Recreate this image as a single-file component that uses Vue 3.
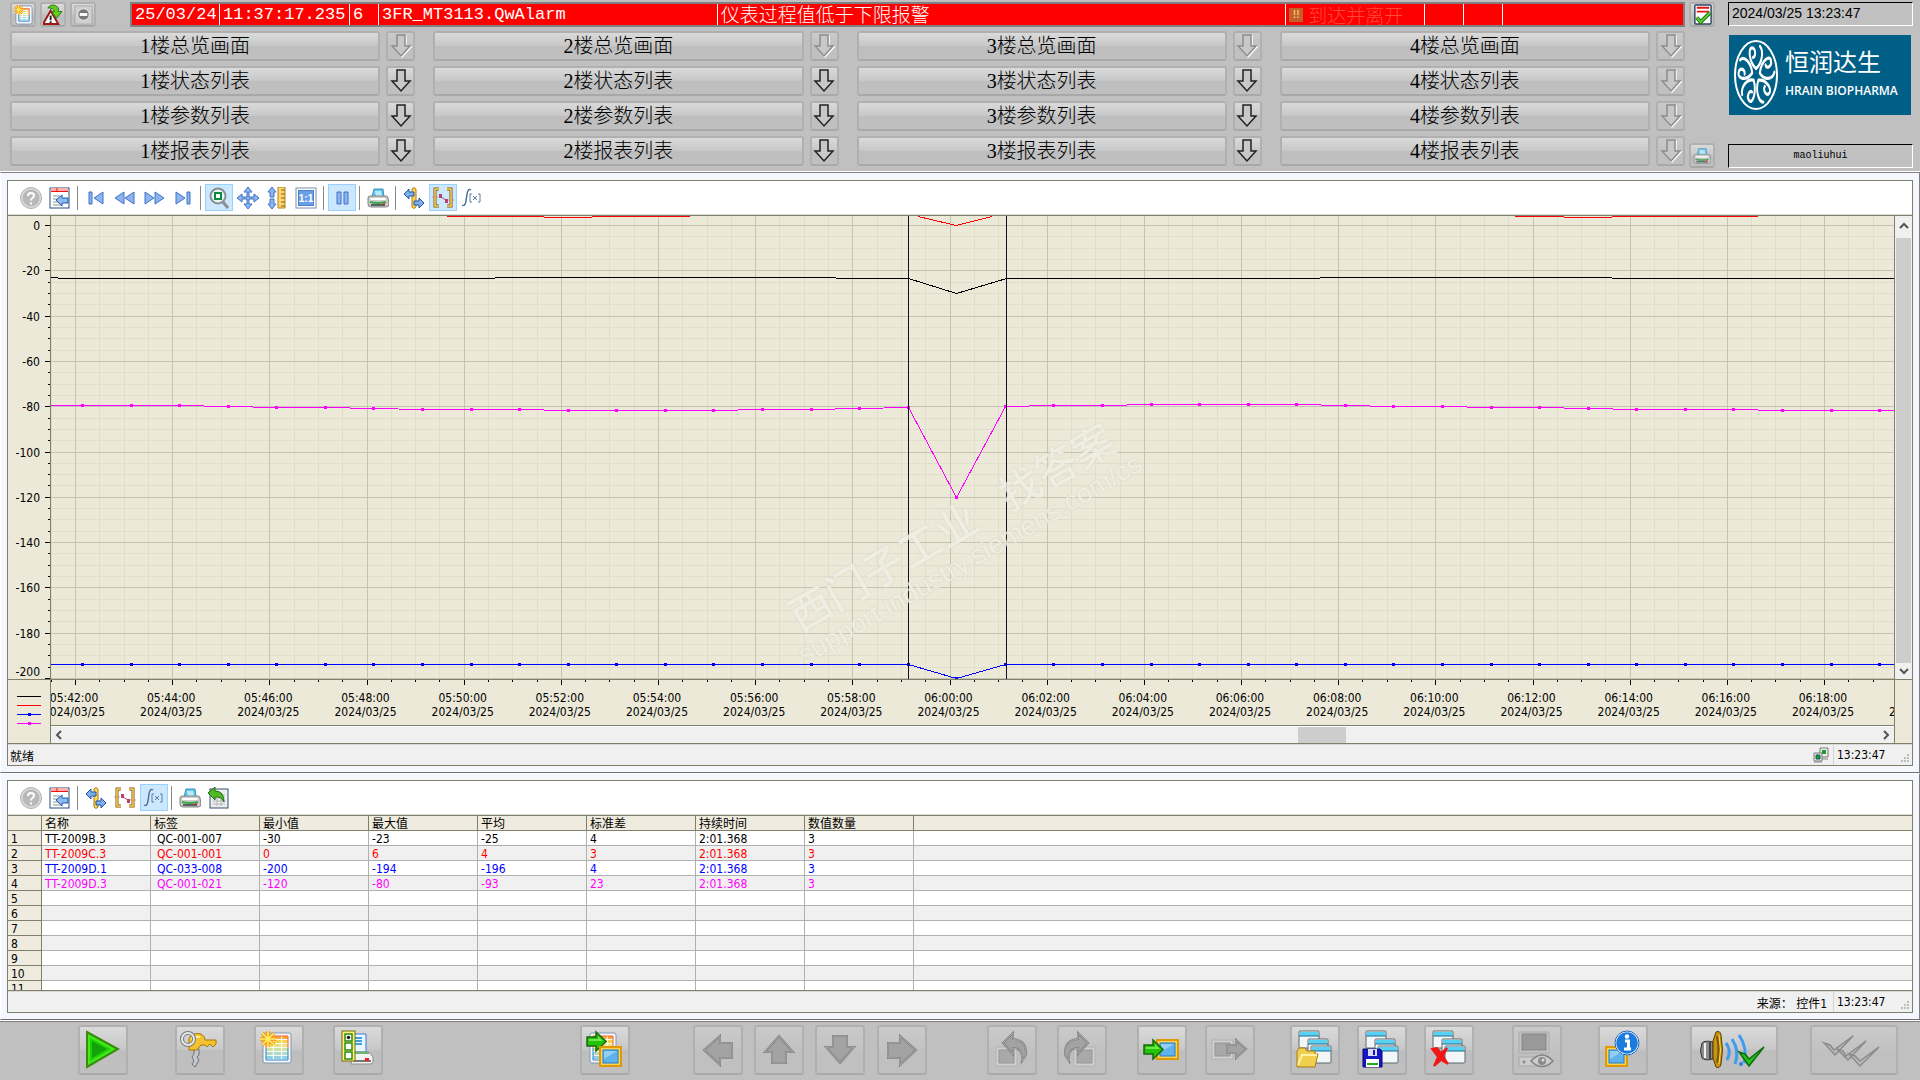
<script setup>
const floors = [1, 2, 3, 4]
const lists = ['总览画面', '状态列表', '参数列表', '报表列表']
const hasMenu = (floor, row) => floor < 4 && row > 0

/* ---------- icons ---------- */
const sheet = (x, y, w, h) => {
  const rows = ['#f9a93c', '#f8d248', '#ece27a', '#cfe2a0', '#b0dcc4', '#8fd0e4']
  const rh = (h - 6) / rows.length
  return `<rect x="${x}" y="${y}" width="${w}" height="${h}" rx="2" fill="#f4f8fc" stroke="#8296ae"/>` +
    rows.map((c, i) => `<rect x="${x + 3}" y="${y + 3 + i * rh}" width="${w - 6}" height="${rh - 1}" fill="${c}"/>`).join('') +
    `<path d="M${x + w / 3 + 1} ${y + 3}v${h - 6}M${x + 2 * w / 3} ${y + 3}v${h - 6}" stroke="#fff"/>` +
    `<path d="M${x + 3} ${y + h / 2}v${h / 2 - 3}h${w - 6}v${3 - h / 2}" fill="none" stroke="#2f86c9"/>` +
    `<path d="M${x + 3} ${y + h / 2}v${3 - h / 2}h${w - 6}v${h / 2 - 3}" fill="none" stroke="#f2662c"/>`
}
const star = (x, y, r) => {
  const k = r * 0.72
  const d = `M${x} ${y - r}V${y + r}M${x - r} ${y}H${x + r}M${x - k} ${y - k}L${x + k} ${y + k}M${x - k} ${y + k}L${x + k} ${y - k}`
  return `<path d="${d}" stroke="#f59a12" stroke-width="${r / 2.2}"/><path d="${d}" stroke="#fff06a" stroke-width="${r / 5}"/>`
}
const win = (x, y) => `<rect x="${x}" y="${y}" width="20" height="17" rx="1" fill="#f3f6f6" stroke="#5d6b70"/><path d="M${x + 1} ${y + 3}h18" stroke="#58d2f4" stroke-width="4"/><path d="M${x} ${y + 5}h20" stroke="#1c6c8e"/>`
const windows = win(9, 6) + win(18, 14) + win(21, 21)
const screen = (x, y) => `<rect x="${x}" y="${y}" width="21" height="19" fill="#ffd34d" stroke="#e09a06" stroke-width="2"/><rect x="${x + 3}" y="${y + 3}" width="15" height="13" fill="#5fb2ec" stroke="#1d7fd0"/><path d="M${x + 4} ${y + 4}h13l-13 8z" fill="#a6dcf8" opacity=".7"/>`
const greenArrow = (x, y) => `<path d="M${x} ${y + 5}h9v-5l10 9.500-10 9.500v-5h-9z" fill="#22c30a" stroke="#1a6a0a" stroke-width="1.500"/><path d="M${x + 2} ${y + 7}h9v-3l5 5h-14z" fill="#6fe84c"/>`
const greyBox = (x, y) => `<rect x="${x}" y="${y}" width="21" height="19" fill="#cfcfcf" stroke="#b2b2b2"/><rect x="${x + 3}" y="${y + 3}" width="15" height="13" fill="#a9a9a9" stroke="#959595"/>`
const greyArrow = d => `<path d="${d}" fill="#a3a3a3" stroke="#7e7e7e" stroke-width="2"/><path d="${d}" fill="none" stroke="#b5b5b5" stroke-width=".8"/>`
const printer = '<path d="M5 10l2-8h9l1 8z" fill="#5fc8ee" stroke="#3a8fb4"/><path d="M8 4h6l1 5H9z" fill="#b8ecfb"/><path d="M1 11q0-2 2-2h16q2 0 2 2l1 6q0 3-3 3H4q-3 0-3-3z" fill="#c9cccb" stroke="#7f8483"/><path d="M4 11h14l1 2H3z" fill="#fff"/><path d="M3 15q8 2 16 0" stroke="#3da648" stroke-width="2" fill="none"/><path d="M4 18h14" stroke="#5b605f" stroke-width="2"/><circle cx="17" cy="17" r="1" fill="#f11"/>'
const help = '<circle cx="11" cy="11" r="9.500" fill="#b9b9b9" stroke="#dcdcdc" stroke-width="2"/><circle cx="11" cy="11" r="10.500" fill="none" stroke="#b0b0b0"/><path d="M8 9q0-3 3-3t3 2.500q0 1.500-1.500 2.500T11 13.500M11 15.500v2" fill="none" stroke="#fff" stroke-width="2"/>'
const report = '<rect x="1" y="1" width="19" height="20" fill="#fff" stroke="#274f7d"/><path d="M2 3h17" stroke="#ffb0a8" stroke-width="4"/><path d="M2 4.500h17M8 1v4" stroke="#f31212"/><path d="M4 9h7M4 12h4M4 15h5M4 18h8" stroke="#8b9096"/><path d="M7 13l6-5v3h6v5h-6v3z" fill="#8fbcf0" stroke="#1f5bb0"/>'
const link = '<path d="M9 2q2-3 4 0v18q-2 3-4 0z" fill="#ffd75a" stroke="#b27b12"/><path d="M1 7l5-5v3h5v4H6v3z" fill="#7fb0ec" stroke="#1f56a4"/><path d="M21 16l-5-5v3h-5v4h5v3z" fill="#7fb0ec" stroke="#1f56a4"/>'
const range = '<path d="M0 10h6M16 13h6" stroke="#d9a0b4"/><path d="M7 2H3v17h4M15 2h4v17h-4" fill="none" stroke="#7a5510" stroke-width="3"/><path d="M7 2H3v17h4M15 2h4v17h-4" fill="none" stroke="#ffcf5c" stroke-width="1.500"/><path d="M8 9l7 5" stroke="#b84168"/><path d="M7 7h3v4H7zM13 12h3v4h-3z" fill="#b84168"/>'
const integral = '<path d="M10 3q-3-2-4 4l-1 7q-1 6-4 4" fill="none" stroke="#4c7194" stroke-width="1.500"/><path d="M11 7H9v8h2M17 7h2v8h-2M12 9l4 4M16 9l-4 4" fill="none" stroke="#5a7fa2"/>'
const blue = 'fill="#8db4ee" stroke="#3f72c6"'

const icons = {
  help, report, printer, link, range, integral,
  first: `<path d="M4 5h3v12H4zM18 5v12l-9-6z" ${blue}/>`,
  rewind: `<path d="M10 5v12l-9-6zM20 5v12l-9-6z" ${blue}/>`,
  forward: `<path d="M2 5v12l9-6zM12 5v12l9-6z" ${blue}/>`,
  last: `<path d="M4 5v12l9-6zM15 5h3v12h-3z" ${blue}/>`,
  zoom: '<circle cx="10" cy="9" r="7.500" fill="#e9f5f2" stroke="#879096" stroke-width="2"/><path d="M15 15l5 6" stroke="#8b8f92" stroke-width="3"/><rect x="7" y="6" width="6" height="6" fill="#fff" stroke="#0a8a3c" stroke-width="2"/>',
  move: `<path d="M11 0l4 5h-3v5h5V7l5 4-5 4v-3h-5v5h3l-4 5-4-5h3v-5H5v3l-5-4 5-4v3h5V5H7z" ${blue}/>`,
  scale: `<path d="M6 0l4 5H8v5H4V5H2zM6 22l4-5H8v-5H4v5H2z" ${blue}/><path d="M12 0h7v21h-7z" fill="#ffd772" stroke="#b57f1d"/><path d="M15 3h4M15 7h4M15 11h4M15 15h4M15 19h4" stroke="#8a5c0c"/>`,
  one: '<rect x="1" y="1" width="20" height="20" fill="#fff" stroke="#7d90aa"/><rect x="3.500" y="3.500" width="15" height="15" fill="#6a9fe6" stroke="#4a80cc"/><text x="11" y="15" text-anchor="middle" font-family="Liberation Sans, sans-serif" font-weight="bold" font-size="10" fill="#fff">1:1</text>',
  pause: `<path d="M6 5h4v12H6zM13 5h4v12h-4z" ${blue}/>`,
  restore: '<rect x="2" y="2" width="18" height="19" fill="#eceeee" stroke="#33506e"/><path d="M5 8h12M5 11h12M5 14h12M5 17h12M9 5v14M13 5v14" stroke="#b4b8b8"/><path d="M0 6l7-6v4q9 0 9 11-3-6-9-5v3z" fill="#4fbb24" stroke="#1f6d10"/>',
  list: sheet(3, 2, 17, 19) + star(6, 6, 5),
  alarm: '<path d="M8 7l8 14H0z" fill="#fff" stroke="#a01515" stroke-width="2"/><path d="M8 12v5M8 18v2" stroke="#222" stroke-width="2"/><path d="M5 4q5-6 11 0v4h4l-6 7-5-7h3q-1-4-7-4z" fill="#62cc22" stroke="#237410"/>',
  stop: '<rect x="2" y="2" width="18" height="19" fill="#cfcfcf" stroke="#aaa"/><circle cx="11" cy="11" r="6" fill="#777" stroke="#eee"/><path d="M7 11h8" stroke="#fff" stroke-width="3"/>',
  ack: '<rect x="3" y="1" width="17" height="20" rx="1" fill="#fff" stroke="#2d4665" stroke-width="1.500"/><path d="M5 4h13M5 8h13" stroke="#e21414" stroke-width="2"/><path d="M5 14l4 5 10-10" fill="none" stroke="#1d6d0e" stroke-width="4"/><path d="M5 14l4 5 10-10" fill="none" stroke="#58d62e" stroke-width="2"/>',
  play: '<path d="M9 7v35l31-18z" fill="#1fd006" stroke="#3c8a10" stroke-width="2"/><path d="M14 16v17l15-9z" fill="#12a30a"/><path d="M11 11v27l24-14z" fill="none" stroke="#45ea1e" stroke-width="2"/>',
  key: '<path d="M19 24h5v6l-2 2 2 3-4 7-3-3 2-3-2-4 2-3z" fill="#c5c8cb" stroke="#6d7175"/><path d="M14 13q5-6 12-4 4 2 4 6h11v4l-3 3-3-3-3 3-2-2h-4l-4 5h-8z" fill="#f3c22d" stroke="#a87608"/><path d="M16 14q4-3 9-2" stroke="#fff0a0" fill="none" stroke-width="2"/><ellipse cx="13" cy="14" rx="6" ry="6" fill="none" stroke="#777" stroke-width="4"/><ellipse cx="13" cy="14" rx="6" ry="6" fill="none" stroke="#e6e8ea" stroke-width="2"/>',
  table: sheet(9, 8, 28, 30) + star(14, 14, 8),
  checklist: '<path d="M17 9h16v18H17z" fill="#eaf6ff" stroke="#3d7ad0"/><path d="M20 13h9M20 16h9M20 19h9" stroke="#3fa2dc" stroke-width="2"/><path d="M20 27h16l4 5v5q0 2-3 2H18z" fill="#f2f2f2" stroke="#8e8e8e"/><path d="M22 28h14" stroke="#6cb56c" stroke-width="2"/><path d="M20 36h18" stroke="#777" stroke-width="2"/><path d="M32 33h4v3h-4z" fill="#e22"/><rect x="9" y="6" width="13" height="30" fill="#fdf56b" stroke="#6f6a16"/><path d="M12 9h7v7h-7zM12 18h7v7h-7zM12 27h7v7h-7z" fill="#fff" stroke="#2c8a1c" stroke-width="1.500"/><circle cx="15.500" cy="12.500" r="1.800" fill="#222"/>',
  toScreen: sheet(10, 8, 26, 30) + greenArrow(7, 7) + screen(20, 22),
  left: greyArrow('M11 25l16-14v7h12v15H27v7z'),
  up: greyArrow('M25 11l14 16h-7v11H18V27h-7z'),
  down: greyArrow('M25 38l14-16h-7V11H18v11h-7z'),
  right: greyArrow('M39 25L23 11v7H11v15h12v7z'),
  undo: greyBox(9, 22) + greyArrow('M16 18L26 8v6q14 1 13 16l-4 6q1-13-9-13v6z'),
  redo: greyBox(17, 22) + greyArrow('M31 18L21 8v6Q7 15 8 30l4 6q-1-13 9-13v6z'),
  enter: screen(20, 15) + greenArrow(7, 15),
  leave: greyBox(7, 15) + greyArrow('M22 20h9v-5l10 9-10 9v-5h-9z'),
  open: windows + '<path d="M7 26l2-3h6l2 3h8v3h3l-3 13H7z" fill="#f1cf4e" stroke="#a67c14"/><path d="M8 40l4-10h15" fill="none" stroke="#fff2a8" stroke-width="2"/>',
  save: windows + '<path d="M6 24h17l2 2v16H6z" fill="#1616c4" stroke="#06066e"/><path d="M11 24h9v7h-9z" fill="#d8dcf4"/><path d="M16 25h2v5h-2z" fill="#1616c4"/><path d="M9 34h13v8H9z" fill="#fff"/><path d="M10 39h11" stroke="#1bb01b" stroke-width="2"/>',
  remove: windows + '<path d="M8 24l5-1 4 5 6-5-4 8 5 8-7-4-7 6 4-9z" fill="#f11818" stroke="#f11818" stroke-width="2"/>',
  monitor: '<rect x="7" y="7" width="30" height="21" rx="1" fill="#c4c4c4" stroke="#aaa"/><rect x="10" y="9" width="24" height="16" fill="#999" stroke="#858585"/><rect x="7" y="32" width="30" height="9" fill="#ccc" stroke="#a8a8a8"/><circle cx="12" cy="37" r="1.500" fill="#888"/><path d="M19 36q11-12 22 0-11 11-22 0z" fill="#ccc" stroke="#808080" stroke-width="1.500"/><circle cx="30" cy="36" r="4" fill="#8a8a8a"/><circle cx="31" cy="35" r="1.500" fill="#ddd"/>',
  info: screen(8, 22) + '<circle cx="29" cy="18" r="11.500" fill="#1d7be0" stroke="#fff" stroke-width="1.500"/><circle cx="29" cy="18" r="12" fill="none" stroke="#1a62b4"/><path d="M27 16h3.500v7M26 24h7" stroke="#fff" stroke-width="3" fill="none"/><circle cx="29" cy="11.500" r="2.200" fill="#fff"/>',
  sound: '<path d="M12 18q3-3 11-1v17q-8 2-11-1-3-7 0-15z" fill="#8d8d8d" stroke="#333"/><path d="M15 18v15" stroke="#f2f2f2" stroke-width="2"/><path d="M20 17v17" stroke="#444" stroke-width="2"/><path d="M23 16l3-9q4-2 5 3 3 15 0 29-1 5-5 3l-3-9z" fill="#c8930f" stroke="#5c3f05"/><path d="M27 11q3 14 0 27" stroke="#7a5606" fill="none" stroke-width="2"/><path d="M29 10q3 15 0 29" stroke="#f6d860" fill="none"/><g fill="none" stroke="#3d9bf0" stroke-width="3"><path d="M36 18q6 8 1 17M42 14q8 12 3 25M49 10q9 13 5 28"/></g><circle cx="51" cy="39" r="2" fill="#2b80e0"/><path d="M49 27l6 2 4 5 15-12-15 19z" fill="#27c11a" stroke="#0f6c0d" stroke-width="1.500"/>',
  checks: '<g fill="#b9b9b9" stroke="#8b8b8b" stroke-width="1.500"><path d="M14 18l6 2 4 5 19-14-18 19z"/><path d="M27 24l6 2 3 5 20-15-18 19z"/><path d="M39 29l6 2 5 5 19-14-19 19z"/></g>',
  net: '<path d="M7 1h8v9H7z" fill="#eee" stroke="#777"/><path d="M9 3h4v4H9z" fill="#1a9e2c"/><path d="M6 12h9" stroke="#888"/><path d="M1 6h8v8H1z" fill="#eee" stroke="#777"/><path d="M3 8h4v4H3z" fill="#1aa62c" stroke="#155"/><path d="M1 15h8" stroke="#888"/>'
}

const trendTools = [
  ['help', '帮助'], ['report', '组态'], null,
  ['first', '第一条'], ['rewind', '上一条'], ['forward', '下一条'], ['last', '最后一条'], null,
  ['zoom', '缩放区域', true], ['move', '移动'], ['scale', '缩放轴'], ['one', '原始视图'], null,
  ['pause', '停止', true], null,
  ['printer', '打印'], null,
  ['link', '定义统计'], ['range', '统计范围', true], ['integral', '计算统计']
]
const statTools = [
  ['help', '帮助'], ['report', '组态'], null,
  ['link', '定义统计'], ['range', '统计范围'], ['integral', '计算统计', true], null,
  ['printer', '打印'], ['restore', '恢复']
]

/* gap = share of the free space in front of the button */
const footer = [
  { icon: 'play', label: '启动', gap: 78 }, { icon: 'key', label: '登录', gap: 47 },
  { icon: 'table', label: '新建列表', gap: 29 }, { icon: 'checklist', label: '打印作业', gap: 29 },
  { icon: 'toScreen', label: '画面切换', gap: 197 },
  { icon: 'left', label: '向左', gap: 63, off: true }, { icon: 'up', label: '向上', gap: 11, off: true },
  { icon: 'down', label: '向下', gap: 11, off: true }, { icon: 'right', label: '向右', gap: 12, off: true },
  { icon: 'undo', label: '后退', gap: 60, off: true }, { icon: 'redo', label: '前进', gap: 20, off: true },
  { icon: 'enter', label: '存储画面', gap: 30 }, { icon: 'leave', label: '调用画面', gap: 18, off: true },
  { icon: 'open', label: '打开组合', gap: 35 }, { icon: 'save', label: '保存组合', gap: 17 },
  { icon: 'remove', label: '删除组合', gap: 17 }, { icon: 'monitor', label: '监视', gap: 38, off: true },
  { icon: 'info', label: '信息', gap: 36 }, { icon: 'sound', label: '声音确认', gap: 42, wide: true },
  { icon: 'checks', label: '全部确认', gap: 32, wide: true, off: true }
]

/* ---------- trend ---------- */
const W = 1843
const H = 463
const STEP = 1749 / 18
const majorX = Array.from({ length: 19 }, (_, i) => Math.round(24 + i * STEP))
const minorX = Array.from({ length: 76 }, (_, i) => Math.round(24 + (i - 1) * STEP / 4)).filter(x => x < W)
const majorY = Array.from({ length: 11 }, (_, i) => Math.round(9 + i * 45.3))
const minorY = Array.from({ length: 41 }, (_, i) => Math.round(9 + i * 11.325))
const pad = n => String(n).padStart(2, '0')
const times = Array.from({ length: 20 }, (_, i) => {
  const m = 342 + i * 2
  return { at: (23 + i * STEP) / W * 100 + '%', time: `${pad(Math.floor(m / 60))}:${pad(m % 60)}:00` }
})
const gridPath = (xs, ys) => xs.map(x => `M${x + 0.5} 0V${H}`).join('') + ys.map(y => `M0 ${y + 0.5}H${W}`).join('')
const minorGrid = gridPath(minorX, minorY)
const majorGrid = gridPath(majorX, majorY)

const magentaY = [189, 189, 189, 190, 191, 191, 192, 193, 193, 193, 194, 194, 194, 194, 193, 193, 192, 191, 281, 190, 189, 189, 188, 188, 188, 188, 189, 190, 190, 191, 191, 192, 193, 193, 193, 194, 194, 194]
const sampleX = i => Math.round(31 + i * 48.57)
const magenta = magentaY.map((y, i) => ({ x: sampleX(i), y }))
const navy = magentaY.map((_, i) => ({ x: sampleX(i), y: i === 18 ? 462 : 448 }))
const line = pts => pts.map(p => `${p.x + 0.5},${p.y + 0.5}`).join(' ')
const magentaLine = `0,189.5 ${line(magenta)} ${W},194.5`
const navyLine = `0,448.5 ${line(navy)} ${W},448.5`
const blackPath = 'M0 61.5H7M7 62.5H444M444 61.500H785M785 62.500H857.500L905.500 77.500L955.500 62.500H1269M1269 61.500H1561M1561 62.500H1843'
const redPath = 'M396 .5H493M493 1.500H541M541 .5H639M867 .5L905.500 9.500L941 .5M1464 .5H1513M1513 1.500H1561M1561 .5H1707'
const legend = [['#000', false], ['#f00', false], ['#00f', true], ['#f0f', true]]

/* ---------- statistics ---------- */
const heads = ['名称', '标签', '最小值', '最大值', '平均', '标准差', '持续时间', '数值数量', '']
const stats = [
  { color: '#000', cells: ['TT-2009B.3', 'QC-001-007', '-30', '-23', '-25', '4', '2:01.368', '3', ''] },
  { color: '#f00', cells: ['TT-2009C.3', 'QC-001-001', '0', '6', '4', '3', '2:01.368', '3', ''] },
  { color: '#00f', cells: ['TT-2009D.1', 'QC-033-008', '-200', '-194', '-196', '4', '2:01.368', '3', ''] },
  { color: '#f0f', cells: ['TT-2009D.3', 'QC-001-021', '-120', '-80', '-93', '23', '2:01.368', '3', ''] }
]
const rows = Array.from({ length: 11 }, (_, i) => stats[i] || { color: '#000', cells: Array(9).fill('') })
</script>

<template>
  <div class="page">
    <header class="top">
      <div class="top-main">
        <div class="alarm-row">
          <button v-for="b in [['list', '报警列表'], ['alarm', '报警画面'], ['stop', '停用']]" :key="b[0]" class="btn mini" :aria-label="b[1]">
            <svg viewBox="0 0 22 22" v-html="icons[b[0]]"></svg>
          </button>
          <div class="alarm">
            <span>25/03/24</span>
            <span>11:37:17.235</span>
            <span>6</span>
            <span>3FR_MT3113.QwAlarm</span>
            <span class="cjk">仪表过程值低于下限报警</span>
            <span class="cjk state"><i class="flag">!!</i>到达并离开</span>
            <span></span>
            <span></span>
            <span></span>
          </div>
        </div>
        <nav class="floors">
          <template v-for="(name, r) in lists" :key="name">
            <div v-for="f in floors" :key="f" class="floor">
              <button class="btn floor-btn">{{ f }}楼{{ name }}</button>
              <button class="btn drop" :disabled="!hasMenu(f, r)" :aria-label="f + '楼' + name + '菜单'">
                <svg viewBox="0 0 24 26">
                  <path v-if="!hasMenu(f, r)" d="M9 3H17V14H22L13 24L4 14H9Z" class="shade" />
                  <path d="M8 2H16V13H21L12 23L3 13H8Z" class="arrow" />
                </svg>
              </button>
            </div>
          </template>
        </nav>
      </div>
      <div class="top-side">
        <button class="btn mini" aria-label="确认报警"><svg viewBox="0 0 22 22" v-html="icons.ack"></svg></button>
        <button class="btn mini" aria-label="打印画面"><svg class="soft" viewBox="0 0 22 22" v-html="icons.printer"></svg></button>
      </div>
      <div class="top-info">
        <div class="sunken clock">2024/03/25 13:23:47</div>
        <div class="logo">
          <svg class="emblem" viewBox="0 0 46 72" fill="none" stroke="#fff">
            <ellipse cx="23" cy="36" rx="21" ry="34" stroke-width="2" />
            <g transform="translate(23 36) scale(1 1.6)" stroke-width="2" stroke-linecap="round">
              <path v-for="a in [0, 72, 144, 216, 288]" :key="a" :transform="`rotate(${a})`" d="M0-4C-7-8-8-17-4-17C0-17 0-11-3-11M0-4C6-7 8-15 4-18" />
            </g>
          </svg>
          <div class="brand">
            <strong>恒润达生</strong>
            <span>HRAIN BIOPHARMA</span>
          </div>
        </div>
        <div class="sunken user">maoliuhui</div>
      </div>
    </header>

    <main>
      <section class="frame">
        <div class="panel">
          <div class="tools">
            <template v-for="(t, i) in trendTools" :key="i">
              <i v-if="!t" class="sep"></i>
              <button v-else class="tool" :class="{ on: t[2] }" :aria-label="t[1]"><svg viewBox="0 0 22 22" v-html="icons[t[0]]"></svg></button>
            </template>
          </div>
          <div class="chart">
            <div class="axis-col">
              <svg class="y-axis" width="42" :height="H">
                <g class="crisp" stroke="#000">
                  <line v-for="y in minorY" :key="'n' + y" x1="40" x2="42" :y1="y + 0.5" :y2="y + 0.5" />
                  <line v-for="y in majorY" :key="y" x1="37" x2="42" :y1="y + 0.5" :y2="y + 0.5" />
                </g>
                <text v-for="(y, i) in majorY" :key="i" x="32" :y="Math.min(y + 5, H - 3)" text-anchor="end">{{ i ? -20 * i : 0 }}</text>
              </svg>
              <div class="legend">
                <svg v-for="(l, i) in legend" :key="i" width="24" height="9" class="crisp">
                  <path d="M0 4.500H24" :stroke="l[0]" />
                  <rect v-if="l[1]" x="11" y="3" width="3" height="3" :fill="l[0]" />
                </svg>
              </div>
            </div>
            <div class="plot-col">
              <div class="plot">
                <svg class="crisp" :viewBox="`0 0 ${W} ${H}`" preserveAspectRatio="none" fill="none">
                  <path :d="minorGrid" stroke="#e1dece" />
                  <path :d="majorGrid" stroke="#c5c3b1" />
                  <path :d="blackPath" stroke="#000" />
                  <path :d="redPath" stroke="#f00" />
                  <polyline :points="magentaLine" stroke="#f0f" />
                  <polyline :points="navyLine" stroke="#00f" />
                  <rect v-for="p in magenta" :key="'m' + p.x" :x="p.x - 1" :y="p.y - 1" width="3" height="3" fill="#f0f" />
                  <rect v-for="p in navy" :key="'b' + p.x" :x="p.x - 1" :y="p.y - 1" width="3" height="3" fill="#00f" />
                  <path d="M857.500 0V463M955.500 0V463" stroke="#101020" />
                </svg>
                <div class="watermark">
                  <div class="wm-title"><span>西门子工业</span><span>找答案</span></div>
                  <div class="wm-url">support.industry.siemens.com/cs</div>
                </div>
              </div>
              <div class="x-axis">
                <svg class="crisp ticks" :viewBox="`0 0 ${W} 5`" preserveAspectRatio="none">
                  <path v-for="x in minorX" :key="'n' + x" :d="`M${x + 0.5} 0V2`" stroke="#000" />
                  <path v-for="x in majorX" :key="x" :d="`M${x + 0.5} 0V5`" stroke="#000" />
                </svg>
                <svg class="x-text">
                  <g v-for="t in times" :key="t.time">
                    <text :x="t.at" y="17" text-anchor="middle">{{ t.time }}</text>
                    <text :x="t.at" y="31" text-anchor="middle">2024/03/25</text>
                  </g>
                </svg>
              </div>
              <div class="h-scroll">
                <button class="scroll-btn" aria-label="向左滚动"><svg viewBox="0 0 10 10"><path d="M6 1L2 5L6 9" /></svg></button>
                <div class="track"><div class="thumb" :style="{ marginLeft: '68%' }"></div></div>
                <button class="scroll-btn" aria-label="向右滚动"><svg viewBox="0 0 10 10"><path d="M3 1L7 5L3 9" /></svg></button>
              </div>
            </div>
            <div class="scroll-col">
              <div class="v-scroll">
                <button class="scroll-btn" aria-label="向上滚动"><svg viewBox="0 0 10 10"><path d="M1 7L5 3L9 7" /></svg></button>
                <div class="v-thumb"></div>
                <button class="scroll-btn" aria-label="向下滚动"><svg viewBox="0 0 10 10"><path d="M1 3L5 7L9 3" /></svg></button>
              </div>
            </div>
          </div>
          <div class="status">
            <span>就绪</span>
            <span class="fill"></span>
            <svg class="net" viewBox="0 0 16 16" v-html="icons.net"></svg>
            <span class="when">13:23:47</span>
            <svg class="grip" viewBox="0 0 9 9"><path d="M7 0h2v2H7zM4 3h2v2H4zM7 3h2v2H7zM1 6h2v2H1zM4 6h2v2H4zM7 6h2v2H7z" fill="#bdbdbd" /></svg>
          </div>
        </div>
      </section>

      <section class="frame second">
        <div class="panel">
          <div class="tools">
            <template v-for="(t, i) in statTools" :key="i">
              <i v-if="!t" class="sep"></i>
              <button v-else class="tool" :class="{ on: t[2] }" :aria-label="t[1]"><svg viewBox="0 0 22 22" v-html="icons[t[0]]"></svg></button>
            </template>
          </div>
          <div class="table-view">
            <table>
              <colgroup><col class="c-num"><col v-for="n in 8" :key="n" class="c-val"><col></colgroup>
              <thead>
                <tr><th></th><th v-for="h in heads" :key="h" scope="col">{{ h }}</th></tr>
              </thead>
              <tbody>
                <tr v-for="(r, i) in rows" :key="i" :style="{ color: r.color }">
                  <th scope="row">{{ i + 1 }}</th>
                  <td v-for="(c, j) in r.cells" :key="j">{{ c }}</td>
                </tr>
              </tbody>
            </table>
          </div>
          <div class="status">
            <span class="fill"></span>
            <span class="source">来源： 控件1</span>
            <span class="when">13:23:47</span>
            <svg class="grip" viewBox="0 0 9 9"><path d="M7 0h2v2H7zM4 3h2v2H4zM7 3h2v2H7zM1 6h2v2H1zM4 6h2v2H4zM7 6h2v2H7z" fill="#bdbdbd" /></svg>
          </div>
        </div>
      </section>
    </main>

    <footer class="bottom">
      <template v-for="b in footer" :key="b.icon">
        <i :style="{ flexGrow: b.gap }"></i>
        <button class="btn big" :class="{ wide: b.wide }" :disabled="b.off" :aria-label="b.label">
          <svg :viewBox="b.wide ? '0 0 88 50' : '0 0 50 50'" v-html="icons[b.icon]"></svg>
        </button>
      </template>
      <i :style="{ flexGrow: 22 }"></i>
    </footer>
  </div>
</template>

<style>
html, body { background: #c0c0c0; }
</style>

<style scoped>
.page {
  min-height: 100vh;
  background: #c0c0c0;
  font-family: "DejaVu Sans Condensed", "Noto Sans", "Noto Sans CJK SC", sans-serif;
  font-size: 12px;
  color: #000;
}
.page *, .page { box-sizing: border-box; }
svg { display: block; }
.crisp { shape-rendering: crispEdges; }
button { margin: 0; padding: 0; font: inherit; color: inherit; background: none; border: 0; }

.btn {
  display: flex;
  align-items: center;
  justify-content: center;
  border: 2px solid #b0b0b0;
  border-bottom-color: #a8a8a8;
  border-radius: 3px;
  background: linear-gradient(#dadada, #c8c8c8 48%, #bebebe 52%, #c0c0c0);
}
.btn:disabled { background: linear-gradient(#cacaca, #c0c0c0 60%); }
.mini { width: 26px; height: 25px; }
.mini svg { width: 21px; height: 21px; }
.mini .soft { width: 18px; height: 18px; opacity: .8; }

/* header */
.top {
  display: grid;
  grid-template-columns: 1fr 30px 198px;
  padding: 2px 7px 3px 10px;
  border-bottom: 1px solid #fff;
}
.top-main { min-width: 0; padding-bottom: 2px; }
.alarm-row { display: flex; gap: 4px; }
.alarm {
  flex: 1;
  display: grid;
  grid-template-columns: 88px 130px 29px 339fr 569fr 139px 39px 39px 180fr;
  height: 25px;
  margin-left: 30px;
  border: 2px solid #808080;
  background: #f00;
  color: #fff;
  font: 17px/21px "Liberation Mono", "Noto Sans CJK SC", monospace;
}
.alarm span { padding-left: 3px; border-right: 1px solid #fff; white-space: nowrap; }
.alarm span:last-child { border-right: 0; }
.alarm .cjk { font: 300 19px/20px "Noto Sans CJK SC", sans-serif; }
.alarm .state { display: flex; align-items: center; gap: 5px; color: #ff4a38; }
.flag {
  width: 14px;
  height: 14px;
  background: #c0602c;
  color: #ffc060;
  font: bold 10px/14px "Liberation Sans", sans-serif;
  text-align: center;
}
.floors {
  display: grid;
  grid-template-columns: repeat(4, 1fr);
  gap: 5px 18px;
  margin-top: 4px;
}
.floor { display: flex; gap: 6px; height: 30px; }
.floor-btn { flex: 1; font: 300 20px/24px "Liberation Serif", "Noto Sans CJK SC", serif; }
.drop { width: 29px; }
.drop svg { width: 24px; height: 26px; }
.arrow { fill: #c8c8c8; stroke: #222; stroke-width: 1.5; }
.shade { fill: none; stroke: #fff; stroke-width: 1.5; }
.drop:disabled .arrow { stroke: #8c8c8c; }
.top-side { display: flex; flex-direction: column; justify-content: space-between; margin-left: 4px; }
.top-info { display: flex; flex-direction: column; justify-content: space-between; margin-left: 13px; }
.sunken { height: 24px; border: 1px solid; border-color: #000 #fff #fff #000; }
.clock { padding-left: 3px; font: 14px/21px "Liberation Sans", sans-serif; }
.user { font: 10px/22px "Liberation Mono", monospace; text-align: center; }
.logo { display: flex; align-items: center; height: 80px; margin: 0 2px 20px 1px; background: #005f87; color: #fff; }
.emblem { width: 46px; height: 72px; margin-left: 4px; }
.brand { display: flex; flex-direction: column; margin-left: 6px; white-space: nowrap; }
.brand strong { font: 400 24px/32px "Noto Sans CJK SC", sans-serif; }
.brand span { font: 600 12px/28px "Open Sans", sans-serif; }

/* framed windows */
.frame {
  padding: 7px 6px 6px;
  border: 1px solid;
  border-color: #808080 #808080 #6e6e6e #fff;
  background: #f4f8fe;
}
.second { padding-top: 6px; border-top-color: #fff; }
.panel { border: 1px solid #7f7f6a; background: #ece9d8; }
.tools {
  display: flex;
  align-items: center;
  height: 34px;
  padding-left: 9px;
  border-bottom: 1px solid #d9d9d9;
  background: #fff;
}
.tool { display: flex; align-items: center; justify-content: center; width: 28px; height: 27px; margin-right: 1px; border: 1px solid transparent; }
.tool.on { border-color: #99d1ff; background: #cce8ff; }
.tool svg { width: 22px; height: 22px; }
.sep { width: 1px; height: 24px; margin: 0 4px 0 2px; background: #8a8a8a; }

.chart { display: grid; grid-template-columns: 43px 1fr 18px; border: solid #7f7f6a; border-width: 1px 0; }
.axis-col { border-right: 1px solid #7f7f6a; }
.y-axis { box-sizing: content-box; border-bottom: 1px solid #7f7f6a; }
.legend { display: flex; flex-direction: column; padding: 12px 0 0 9px; }
.plot-col { min-width: 0; }
.plot { position: relative; border-bottom: 1px solid #7f7f6a; overflow: hidden; }
.plot > svg { width: 100%; height: 463px; }
.watermark {
  position: absolute;
  left: 0;
  right: 0;
  top: 286px;
  margin-right: 26px;
  color: #f2f0e6;
  text-shadow: 0 0 2px #cfccba;
  opacity: .8;
  text-align: center;
  transform: rotate(-30deg);
}
.wm-title { display: flex; justify-content: center; gap: 32px; font: 500 42px/42px "Noto Sans CJK SC", sans-serif; }
.wm-url { font: 27px/36px "Liberation Sans", sans-serif; }
.x-axis { height: 46px; border-bottom: 1px solid #7f7f6a; overflow: hidden; }
.ticks { width: 100%; height: 5px; }
.x-text { width: 100%; height: 40px; }
.h-scroll { display: flex; height: 17px; border-top: 1px solid #fff; background: #f0f0f0; }
.scroll-btn { display: flex; align-items: center; justify-content: center; width: 17px; height: 16px; }
.scroll-btn svg { width: 10px; height: 10px; fill: none; stroke: #555; stroke-width: 2; }
.track { flex: 1; }
.thumb { width: 48px; height: 16px; background: #cdcdcd; }
.scroll-col { border-left: 1px solid #7f7f6a; }
.v-scroll { display: flex; flex-direction: column; align-items: center; height: 464px; padding: 2px 0 0; border-bottom: 1px solid #7f7f6a; background: #f0f0f0; }
.v-thumb { flex: 1; width: 15px; margin-top: 4px; background: #cdcdcd; }

.status {
  display: flex;
  align-items: center;
  height: 21px;
  padding: 0 2px;
  border-top: 1px solid #d8d8d8;
  background: #f0f0f0;
}
.fill { flex: 1; }
.net { width: 16px; height: 16px; margin-right: 4px; }
.source { margin-right: 6px; }
.when { width: 62px; padding-left: 3px; border-left: 1px solid #d4d4d4; line-height: 20px; }
.grip { width: 9px; height: 9px; align-self: flex-end; margin: 0 1px 2px 5px; }

.table-view { height: 176px; border: solid #7f7f6a; border-width: 1px 0; background: #fff; overflow: hidden; }
table { width: 100%; table-layout: fixed; border-collapse: separate; border-spacing: 0; }
.c-num { width: 34px; }
.c-val { width: 109px; }
th, td {
  height: 15px;
  padding: 2px 3px 0;
  border: solid #b0b0b0;
  border-width: 0 1px 1px 0;
  font-weight: 400;
  line-height: 12px;
  text-align: left;
  white-space: nowrap;
}
th { border-color: #7f7f6a; background: #efebde; color: #000; }
th:last-child, td:last-child { border-right: 0; }
tbody tr:nth-child(even) td { background: #f0f0f0; }
td:nth-child(3) { padding-left: 6px; }

/* footer */
.bottom { display: flex; padding: 3px 0 5px; border-top: 1px solid #808080; box-shadow: 0 -1px #fff; margin-top: 1px; }
.bottom i { flex-basis: 0; }
.big { width: 50px; height: 50px; flex: none; }
.big svg { width: 50px; height: 50px; flex: none; }
.big.wide, .big.wide svg { width: 88px; }
</style>
